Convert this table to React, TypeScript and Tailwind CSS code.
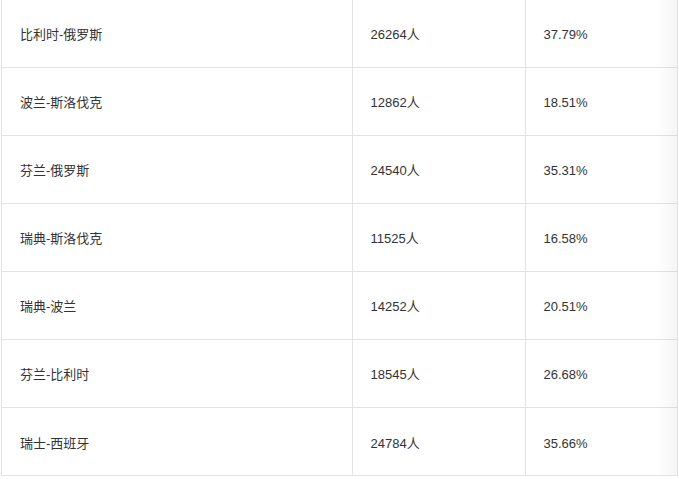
import React from 'react';

const rows = [
  { pair: '比利时-俄罗斯', count: '26264人', ratio: '37.79%' },
  { pair: '波兰-斯洛伐克', count: '12862人', ratio: '18.51%' },
  { pair: '芬兰-俄罗斯', count: '24540人', ratio: '35.31%' },
  { pair: '瑞典-斯洛伐克', count: '11525人', ratio: '16.58%' },
  { pair: '瑞典-波兰', count: '14252人', ratio: '20.51%' },
  { pair: '芬兰-比利时', count: '18545人', ratio: '26.68%' },
  { pair: '瑞士-西班牙', count: '24784人', ratio: '35.66%' },
];

export default function App() {
  return (
    <div
      className="bg-white w-[679px] h-[479px] overflow-hidden pl-px"
      style={{ fontFamily: '"Liberation Sans", "Noto Sans CJK SC", sans-serif' }}
    >
      <div className="relative -mt-px w-[677px] border-l border-r border-b border-[#e3e3e3]">
        <table className="w-full table-fixed border-collapse text-[13px] text-[#333]">
          <tbody>
            {rows.map((r, i) => (
              <tr key={i} className="h-[68px] border-b border-[#e3e3e3] last:border-b-0">
                <td className="w-[350px] pl-[18px] pt-[4px] border-r border-[#e3e3e3]">{r.pair}</td>
                <td className="w-[173px] pl-[18px] pt-[4px] border-r border-[#e3e3e3]">{r.count}</td>
                <td className="pl-[18px] pt-[4px]">{r.ratio}</td>
              </tr>
            ))}
          </tbody>
        </table>
        {/* scroll shadow */}
        <div className="absolute right-0 top-0 bottom-0 w-[20px] bg-gradient-to-r from-transparent to-black/[0.04] pointer-events-none" />
      </div>
    </div>
  );
}
